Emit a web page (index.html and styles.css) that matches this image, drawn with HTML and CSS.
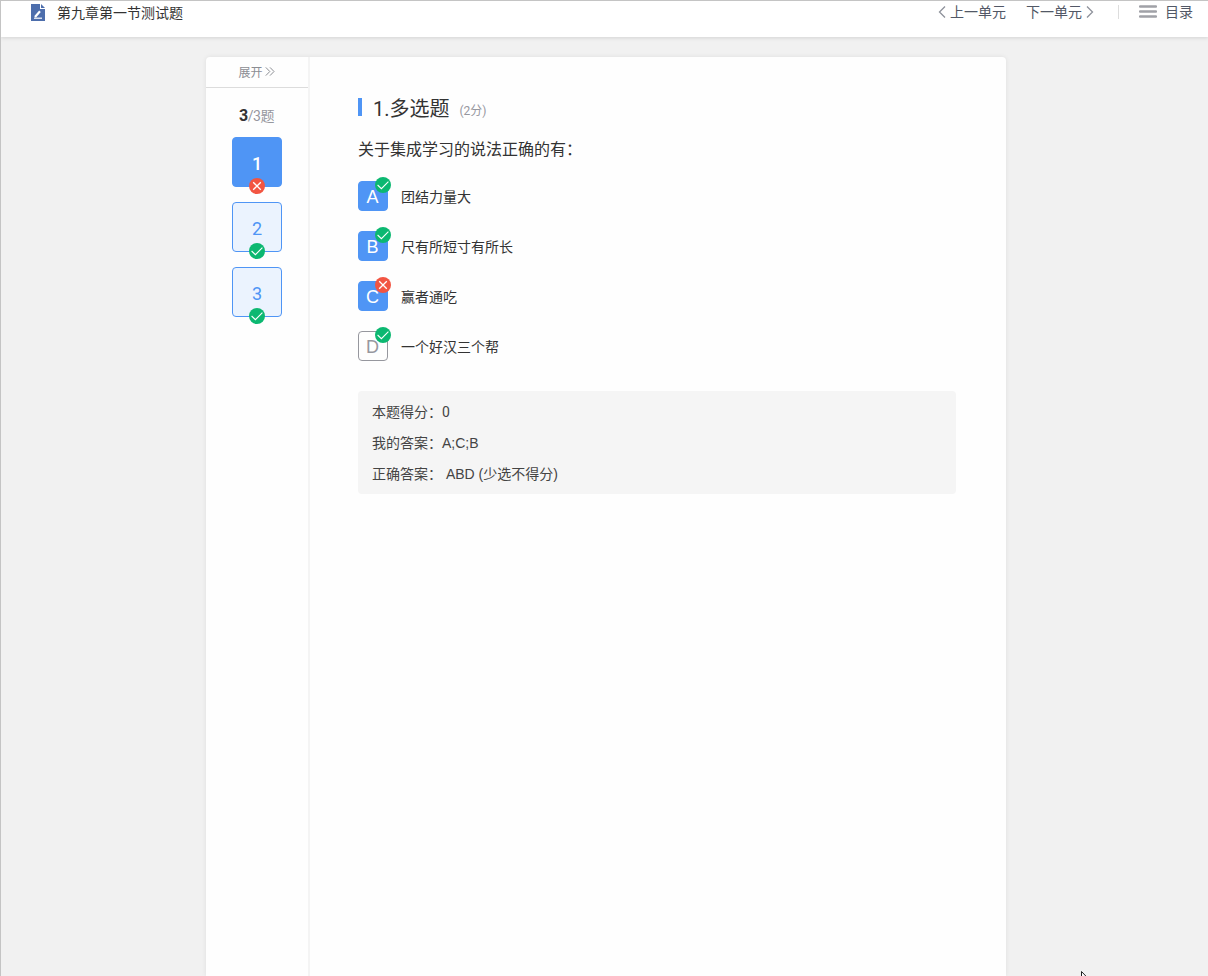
FILE: index.html
```html
<!DOCTYPE html>
<html lang="zh-CN">
<head>
    <meta charset="UTF-8">
    <meta name="viewport" content="width=device-width, initial-scale=1.0">
    <title>第九章第一节测试题</title>
    <link rel="stylesheet" href="styles.css">
</head>
<body>
    <svg class="sprite" width="0" height="0">
        <symbol id="icon-right" viewBox="0 0 16 16">
            <circle cx="8" cy="8" r="8" fill="#0cb871"/>
            <path d="M2.6 8 L6.4 11.7 L13.4 4.7" fill="none" stroke="#fff" stroke-width="1.1"/>
        </symbol>
        <symbol id="icon-wrong" viewBox="0 0 16 16">
            <circle cx="8" cy="8" r="8" fill="#f25542"/>
            <path d="M4.2 4.2 L11.8 11.8 M11.8 4.2 L4.2 11.8" fill="none" stroke="#fff" stroke-width="1.3"/>
        </symbol>
    </svg>

    <header class="header">
        <svg class="doc-icon" width="14" height="17" viewBox="0 0 14 17">
            <path d="M0 0 H9 V5 H14 V17 H0 Z" fill="#4d6eac"/>
            <path d="M10 0 L14 4 H10 Z" fill="#4d6eac"/>
            <path d="M9 7.2 L4 13" stroke="#fff" stroke-width="2.2"/>
            <path d="M3 14.2 H11" stroke="#fff" stroke-width="1.2"/>
        </svg>
        <h1 class="title">第九章第一节测试题</h1>
        <nav class="nav">
            <a class="prev">
                <svg width="8" height="12" viewBox="0 0 8 12"><path d="M7 .5 L1.5 6 L7 11.5"/></svg>
                <span>上一单元</span>
            </a>
            <a class="next">
                <span>下一单元</span>
                <svg width="8" height="12" viewBox="0 0 8 12"><path d="M1 .5 L6.5 6 L1 11.5"/></svg>
            </a>
            <a class="catalog">
                <svg width="18" height="13" viewBox="0 0 18 13"><path d="M1 1.5 H17 M1 6.5 H17 M1 11.5 H17"/></svg>
                <span>目录</span>
            </a>
        </nav>
    </header>

    <main class="container">
        <aside class="sidebar">
            <div class="expand">
                <span>展开</span>
                <svg width="10" height="9" viewBox="0 0 10 9"><path d="M.8 .4 L4.8 4.5 L.8 8.6 M5 .4 L9 4.5 L5 8.6"/></svg>
            </div>
            <div class="count"><b>3</b>/3题</div>
            <ul class="cards">
                <li class="card current">1<svg class="mark"><use href="#icon-wrong"/></svg></li>
                <li class="card">2<svg class="mark"><use href="#icon-right"/></svg></li>
                <li class="card">3<svg class="mark"><use href="#icon-right"/></svg></li>
            </ul>
        </aside>

        <section class="question">
            <h2 class="question-type"><span>1.多选题</span><small>(2分)</small></h2>
            <p class="question-text">关于集成学习的说法正确的有：</p>
            <ul class="options">
                <li class="option">
                    <span class="letter checked">A<svg class="mark"><use href="#icon-right"/></svg></span>
                    <span>团结力量大</span>
                </li>
                <li class="option">
                    <span class="letter checked">B<svg class="mark"><use href="#icon-right"/></svg></span>
                    <span>尺有所短寸有所长</span>
                </li>
                <li class="option">
                    <span class="letter checked">C<svg class="mark"><use href="#icon-wrong"/></svg></span>
                    <span>赢者通吃</span>
                </li>
                <li class="option">
                    <span class="letter">D<svg class="mark"><use href="#icon-right"/></svg></span>
                    <span>一个好汉三个帮</span>
                </li>
            </ul>
            <div class="result">
                <p>本题得分：<span class="score">0</span></p>
                <p>我的答案：A;C;B</p>
                <p>正确答案： ABD (少选不得分)</p>
            </div>
        </section>
    </main>

    <svg class="cursor" width="12" height="19" viewBox="0 0 12 19">
        <path d="M.5 .5 V16 L4 12.7 L6.5 18 L8.5 17 L6.2 12 H11.5 Z" fill="#fff" stroke="#222"/>
    </svg>
</body>
</html>
```
FILE: styles.css
```css
* {
    margin: 0;
    padding: 0;
    box-sizing: border-box;
}

body {
    position: relative;
    display: flex;
    flex-direction: column;
    height: 100vh;
    overflow: hidden;
    background: #f1f1f1;
    border-top: 1px solid #c4c4c4;
    border-left: 1px solid #c4c4c4;
    color: #333;
    font-family: "Liberation Sans", "Noto Sans CJK SC", sans-serif;
    font-size: 14px;
}

ul {
    list-style: none;
}

.sprite {
    position: absolute;
}

/* Header */
.header {
    display: flex;
    flex: none;
    align-items: flex-start;
    height: 36px;
    padding: 0 15px 0 30px;
    background: #fff;
    box-shadow: 0 1px 4px rgba(0, 0, 0, 0.13);
}

.doc-icon {
    margin-top: 3px;
}

.title {
    margin: 2px 0 0 12px;
    font-size: 14px;
    font-weight: 400;
    line-height: 20px;
}

.nav {
    display: flex;
    margin-left: auto;
    color: #525866;
    line-height: 20px;
    margin-top: 1px;
}

.nav a {
    display: flex;
    align-items: center;
}

.nav svg {
    fill: none;
    stroke: #8e929b;
    stroke-width: 1.3;
}

.prev {
    gap: 4px;
    margin-right: 20px;
}

.next {
    gap: 4px;
    margin-right: 24px;
}

.catalog {
    gap: 8px;
}

.catalog::before {
    content: '';
    width: 1px;
    height: 14px;
    margin-right: 12px;
    background: #ddd;
}

.nav .catalog svg {
    margin-top: -1px;
    stroke: #a0a1a7;
    stroke-width: 2.4;
    stroke-linecap: round;
}

/* Main panel */
.container {
    display: flex;
    flex: 1;
    width: 800px;
    margin: 20px 0 0 205px;
    background: #fefefe;
    border-radius: 4px 4px 0 0;
    box-shadow: 0 0 5px rgba(0, 0, 0, 0.08);
}

.sidebar {
    width: 104px;
    border-right: 2px solid #f4f4f4;
}

.expand {
    display: flex;
    align-items: center;
    justify-content: center;
    gap: 2px;
    height: 31px;
    padding: 0 1px 2px 0;
    border-bottom: 1px solid #dcdcdc;
    color: #8b8d93;
    font-size: 12px;
}

.expand svg {
    fill: none;
    stroke: #8b8d93;
}

.count {
    margin-top: 17px;
    padding-right: 1px;
    color: #96979e;
    font-family: Roboto, "Noto Sans CJK SC", sans-serif;
    font-size: 14px;
    line-height: 22px;
    letter-spacing: -0.5px;
    text-align: center;
}

.count b {
    color: #333;
    font-size: 16px;
}

.cards {
    display: flex;
    flex-direction: column;
    align-items: center;
    gap: 15px;
    margin-top: 10px;
}

.card {
    position: relative;
    width: 50px;
    height: 50px;
    border: 1px solid #4f95f5;
    border-radius: 4px;
    background: #ebf3fe;
    color: #4f95f5;
    font-family: Roboto, sans-serif;
    font-size: 18px;
    line-height: 52px;
    text-align: center;
}

.card.current {
    background: #4f95f5;
    color: #fff;
    font-weight: 500;
}

.mark {
    position: absolute;
    width: 16px;
    height: 16px;
}

.card .mark {
    left: 16px;
    bottom: -8px;
}

/* Question */
.question {
    flex: 1;
    padding: 39px 50px 0 48px;
}

.question-type {
    display: flex;
    align-items: center;
    height: 26px;
    font-family: Roboto, "Noto Sans CJK SC", sans-serif;
    font-size: 20px;
    font-weight: 400;
    line-height: 26px;
}

.question-type::before {
    content: '';
    width: 4px;
    height: 18px;
    margin: 0 11px 5px 0;
    background: #4f95f5;
}

.question-type small {
    margin: 4px 0 0 10px;
    color: #96979e;
    font-size: 12px;
}

.question-text {
    margin-top: 16px;
    font-size: 16px;
    line-height: 24px;
}

.options {
    display: flex;
    flex-direction: column;
    gap: 20px;
    margin-top: 19px;
}

.option {
    display: flex;
    align-items: center;
    gap: 13px;
    height: 30px;
}

.letter {
    position: relative;
    width: 30px;
    height: 30px;
    padding-right: 1px;
    border: 1px solid #96979e;
    border-radius: 4px;
    color: #96979e;
    font-size: 18px;
    line-height: 31px;
    text-align: center;
}

.letter.checked {
    border-color: #4f95f5;
    background: #4f95f5;
    color: #fff;
}

.letter .mark {
    top: -5px;
    right: -4px;
}

.result {
    height: 103px;
    margin-top: 30px;
    padding: 6px 14px;
    border-radius: 4px;
    background: #f5f5f5;
    color: #444;
    line-height: 31px;
}

.score {
    font-family: Roboto, sans-serif;
}

.cursor {
    position: absolute;
    left: 1080px;
    top: 970px;
}
```
